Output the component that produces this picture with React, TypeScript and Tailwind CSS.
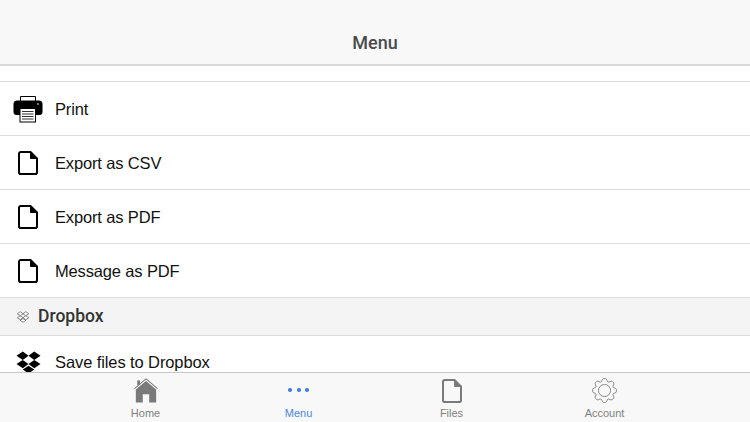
import type { ReactNode } from "react";

// eight rounded cog teeth, outer radius 12 / valley radius 9.4
const gearPath = Array.from({ length: 8 }, (_, i) => {
  const pt = (deg: number, r: number) => {
    const a = ((i * 45 + deg - 90) * Math.PI) / 180;
    return `${(13 + r * Math.cos(a)).toFixed(2)} ${(13 + r * Math.sin(a)).toFixed(2)}`;
  };
  return `${i === 0 ? "M" : "L"}${pt(-22.5, 9.6)} C${pt(-14, 9.6)} ${pt(-13, 12.4)} ${pt(-6, 12.4)} L${pt(6, 12.4)} C${pt(13, 12.4)} ${pt(14, 9.6)} ${pt(22.5, 9.6)}`;
}).join(" ") + "Z";

function FileIcon({ className, stroke = "#000" }: { className?: string; stroke?: string }) {
  return (
    <svg viewBox="0 0 20 24" className={className} fill="none" stroke={stroke} strokeWidth="2" strokeLinejoin="round">
      <path d="M2.800 1h9.700L19 7.500V21.200a1.800 1.800 0 0 1-1.800 1.800H2.800A1.800 1.800 0 0 1 1 21.200V2.800A1.800 1.800 0 0 1 2.800 1Z" />
      <path d="M12.500 1.500V7.500H18.500" fill={stroke} strokeWidth="1" />
    </svg>
  );
}

function PrinterIcon() {
  return (
    <svg viewBox="0 0 30 28" className="w-[30px] h-[28px]">
      <path d="M7.500 6V1.500h15V6" fill="#fff" stroke="#000" strokeWidth="1" />
      <path d="M4 5.500h22a3.500 3.500 0 0 1 3.500 3.500v8a3 3 0 0 1-3 3H3.500a3 3 0 0 1-3-3V9A3.500 3.500 0 0 1 4 5.500Z" fill="#000" />
      <circle cx="25" cy="9" r="0.800" fill="#fff" />
      <rect x="7" y="13.500" width="15.500" height="13.500" fill="#fff" stroke="#000" strokeWidth="1" />
      <path d="M9 16.500h11.500M9 19h11.500M9 21.500h11.500M9 24h11.500" stroke="#333" strokeWidth="1.100" />
    </svg>
  );
}

function DropboxIcon({ className, outline }: { className?: string; outline?: boolean }) {
  const p = outline
    ? { fill: "#fff", stroke: "#666", strokeWidth: 1.6, strokeLinejoin: "round" as const }
    : { fill: "#000" };
  return (
    <svg viewBox="0 0 24 22" className={className}>
      <path d="M6.500 0.500 0.500 4.500 6.500 8.500 12 4.500Z" {...p} />
      <path d="M17.500 0.500 23.500 4.500 17.500 8.500 12 4.500Z" {...p} />
      <path d="M6.500 8.500 0.500 12.500 6.500 16.500 12 12.500Z" {...p} />
      <path d="M17.500 8.500 23.500 12.500 17.500 16.500 12 12.500Z" {...p} />
      <path d="M6.500 17.800 12 14 17.500 17.800 12 21.500Z" {...p} />
    </svg>
  );
}

function HomeIcon() {
  return (
    <svg viewBox="0 0 26 27" className="w-[24px] h-[25px]">
      <path d="M0.500 11.500 13 1 25.500 11.500" fill="none" stroke="#7a7a7a" strokeWidth="1.100" />
      <rect x="3.500" y="2.500" width="3" height="5" fill="#7a7a7a" />
      <path d="M2 12.500 13 3.300 24 12.500V26.500H16.500V17.500H9.500V26.500H2Z" fill="#7a7a7a" />
    </svg>
  );
}

function GearIcon() {
  return (
    <svg viewBox="0 0 26 26" className="w-[25px] h-[25px]" fill="none" stroke="#777" strokeWidth="0.900" strokeLinejoin="round">
      <path d={gearPath} />
      <circle cx="13" cy="13" r="6.300" />
    </svg>
  );
}

function Row({ icon, label, last }: { icon: ReactNode; label: string; last?: boolean }) {
  return (
    <div className={last ? "flex h-[54px] shrink-0 items-center" : "flex h-[54px] shrink-0 items-center border-b border-[#dcdcdc]"}>
      <div className="flex w-[55px] shrink-0 justify-center pl-[1px]">{icon}</div>
      <span className={last ? "pb-[1px] text-[16.5px] tracking-[-0.1px] text-[#111]" : "pt-[1px] text-[16.5px] tracking-[-0.15px] text-[#111]"}>{label}</span>
    </div>
  );
}

function Tab({ icon, label, active }: { icon: ReactNode; label: string; active?: boolean }) {
  return (
    <div className="flex w-[153px] flex-col items-center">
      <div className="flex h-[30px] items-end">{icon}</div>
      <span className={active ? "mt-[3px] text-[11px] leading-[14px] text-[#4a86e0]" : "mt-[3px] text-[11px] leading-[14px] text-[#808080]"}>{label}</span>
    </div>
  );
}

export default function App() {
  const doc = <FileIcon className="h-[24px] w-[20px]" />;
  return (
    <div className="flex h-[422px] w-[750px] flex-col overflow-hidden bg-white font-['Liberation_Sans',Arial,sans-serif]">
      <header className="flex h-[66px] shrink-0 items-end justify-center border-b-2 border-[#dadada] bg-[#f8f8f8] pb-[11px]">
        <h1 className="font-['Roboto',sans-serif] text-[18px] font-medium leading-[20px] text-[#4a4a4a]">Menu</h1>
      </header>
      <main className="flex min-h-0 flex-1 flex-col overflow-hidden">
        <div className="h-[16px] shrink-0 border-b border-[#dcdcdc]" />
        <Row icon={<PrinterIcon />} label="Print" />
        <Row icon={doc} label="Export as CSV" />
        <Row icon={doc} label="Export as PDF" />
        <Row icon={doc} label="Message as PDF" />
        <div className="flex h-[38px] shrink-0 items-center gap-[9px] border-b border-[#dcdcdc] bg-[#f4f4f4] pl-[17px]">
          <DropboxIcon outline className="h-[12px] w-[12px]" />
          <span className="font-['Roboto',sans-serif] text-[17.5px] font-medium text-[#333]">Dropbox</span>
        </div>
        <Row icon={<div className="mb-[2px]"><DropboxIcon className="h-[23px] w-[25px]" /></div>} label="Save files to Dropbox" last />
      </main>
      <nav className="flex h-[50px] shrink-0 justify-center border-t border-[#c8c8c8] bg-[#f8f8f8]">
        <div className="flex">
          <Tab icon={<HomeIcon />} label="Home" />
          <Tab
            icon={
              <div className="mb-[11px] flex gap-[4.500px]">
                <span className="h-[4px] w-[4px] rounded-full bg-[#3b78d8]" />
                <span className="h-[4px] w-[4px] rounded-full bg-[#3b78d8]" />
                <span className="h-[4px] w-[4px] rounded-full bg-[#3b78d8]" />
              </div>
            }
            label="Menu"
            active
          />
          <Tab icon={<FileIcon className="h-[24px] w-[20px]" stroke="#7a7a7a" />} label="Files" />
          <Tab icon={<GearIcon />} label="Account" />
        </div>
      </nav>
    </div>
  );
}
